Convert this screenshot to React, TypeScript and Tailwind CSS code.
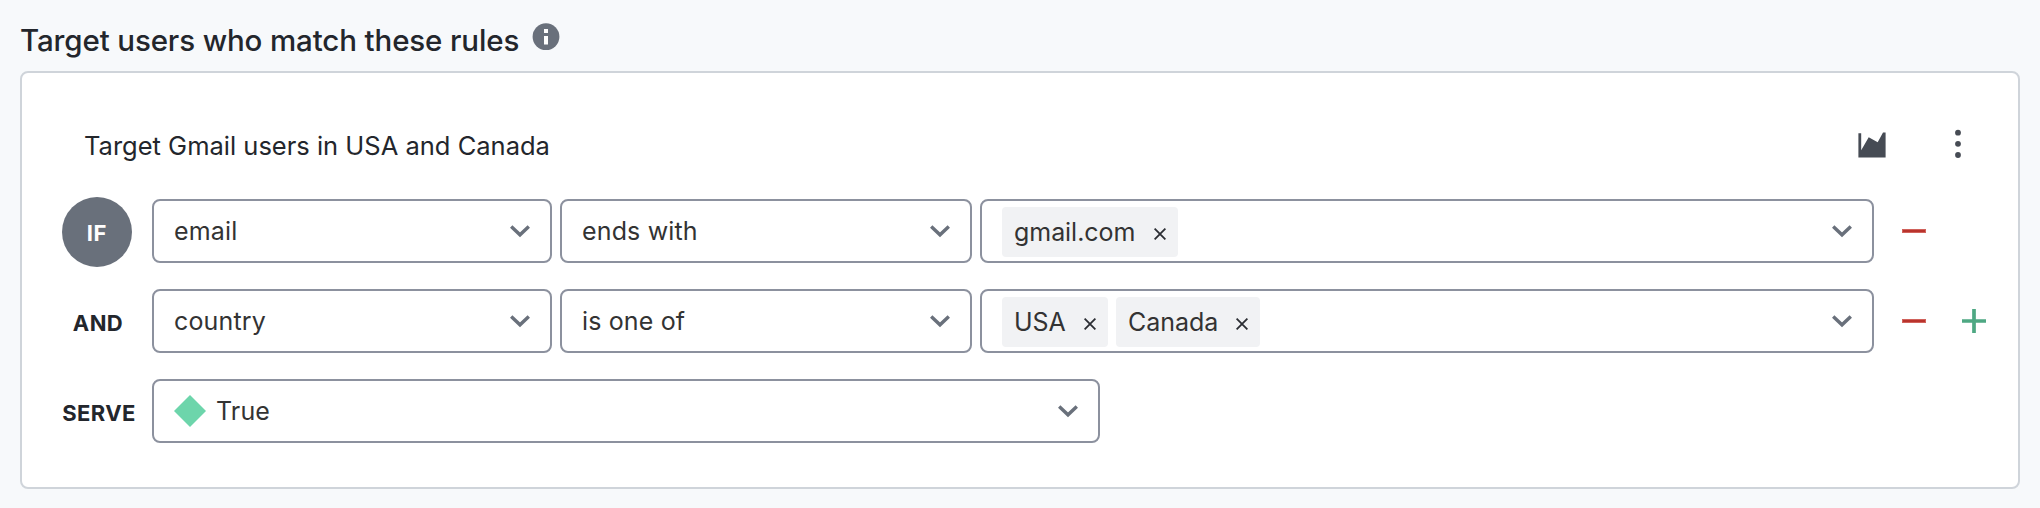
import React from "react";

function Chevron() {
  return (
    <svg width="24" height="16" viewBox="0 0 24 16" fill="none" className="shrink-0">
      <path d="M3.2 3.4 12 11.8l8.8-8.4" stroke="#69707b" strokeWidth="3.4" />
    </svg>
  );
}

function Select({ className, children }: { className: string; children: React.ReactNode }) {
  return (
    <div
      className={`flex h-16 shrink-0 items-center justify-between rounded-lg border-2 border-[#8c919e] bg-white pr-[18px] pl-5 text-[25px] leading-[32px] tracking-[0.15px] text-[#333333] ${className}`}
    >
      <div className="flex items-center">{children}</div>
      <Chevron />
    </div>
  );
}

function Tag({ className, label }: { className: string; label: string }) {
  return (
    <div
      className={`flex h-[50px] items-center justify-between rounded-[4px] bg-[#f1f2f4] pr-3 pl-3 tracking-[-0.05px] ${className}`}
    >
      <span>{label}</span>
      <svg width="12" height="12" viewBox="0 0 12 12" className="mt-[3px]">
        <path d="M0.6 0.6 11.4 11.4M11.4 0.6 0.6 11.4" stroke="#2b2d33" strokeWidth="1.8" />
      </svg>
    </div>
  );
}

function Minus() {
  return (
    <svg width="24" height="24" viewBox="0 0 24 24" className="shrink-0">
      <rect x="0" y="10" width="24" height="4" fill="#d0625b" />
      <rect x="1" y="11" width="22" height="2" fill="#b9332c" />
    </svg>
  );
}

function Plus() {
  return (
    <svg width="24" height="24" viewBox="0 0 24 24" className="shrink-0">
      <path d="M0 12H24M12 0V24" stroke="#4ea883" strokeWidth="3.7" />
    </svg>
  );
}

function RowLabel({ className, children }: { className: string; children: React.ReactNode }) {
  return (
    <div
      className={`flex w-[112px] shrink-0 justify-center pt-1 text-[22px] leading-[28px] font-bold tracking-[0.4px] text-[#23262c] ${className}`}
    >
      {children}
    </div>
  );
}

export default function App() {
  return (
    <main className="h-[508px] w-[2040px] overflow-hidden bg-[#f7f9fb] px-5 pt-[19px] font-['Inter',sans-serif] text-[#23262c]">
      <header className="flex h-[52px] items-start">
        <h1 className="w-[512px] text-[29.5px] leading-[42px] font-medium tracking-[-0.13px] whitespace-nowrap">
          Target users who match these rules
        </h1>
        <svg width="28" height="28" viewBox="0 0 28 28" className="mt-1">
          <circle cx="14" cy="13.7" r="13.4" fill="#69707b" />
          <path d="M12 6h4v4h-4zM12 13h4v8.6h-4z" fill="#fff" />
        </svg>
      </header>

      <section className="flex h-[418px] w-[2000px] flex-col rounded-lg border-2 border-[#cfd4da] bg-white pl-[18px]">
        <div className="flex h-[126px] items-start">
          <h2 className="mt-[56px] ml-[44px] w-[1772px] text-[25.5px] leading-[34px] whitespace-nowrap">
            Target Gmail users in USA and Canada
          </h2>
          <svg width="32" height="32" viewBox="0 0 32 32" className="mt-[56px] shrink-0">
            <path
              d="M2.4 4.2h2.8v17L12.7 8.2l9 5L27 3.4h2.6v25H2.4z"
              fill="#464b54"
            />
          </svg>
          <svg width="8" height="32" viewBox="0 0 8 32" className="mt-[56px] ml-[66px] shrink-0">
            <circle cx="4" cy="3.7" r="2.9" fill="#464b54" />
            <circle cx="4" cy="14.8" r="2.9" fill="#464b54" />
            <circle cx="4" cy="26" r="2.9" fill="#464b54" />
          </svg>
        </div>

        <div className="flex flex-col gap-[26px]">
          <div className="flex h-16 items-center">
            <div className="flex w-[112px] shrink-0 pl-[22px]">
              <div className="mt-[2px] flex size-[70px] shrink-0 items-center justify-center rounded-full bg-[#69707b] pt-[2px] text-[22px] leading-[28px] font-bold tracking-[0.6px] text-white">
                IF
              </div>
            </div>
            <Select className="w-[400px]">email</Select>
            <Select className="ml-2 w-[412px]">ends with</Select>
            <Select className="ml-2 w-[894px]">
              <Tag className="mt-[2px] w-[176px]" label="gmail.com" />
            </Select>
            <div className="ml-7 flex">
              <Minus />
            </div>
          </div>

          <div className="flex h-16 items-center">
            <RowLabel className="pl-[4px]">AND</RowLabel>
            <Select className="w-[400px]">country</Select>
            <Select className="ml-2 w-[412px]">is one of</Select>
            <Select className="ml-2 w-[894px]">
              <Tag className="mt-[2px] w-[106px]" label="USA" />
              <Tag className="mt-[2px] ml-2 w-[144px]" label="Canada" />
            </Select>
            <div className="ml-7 flex gap-9">
              <Minus />
              <Plus />
            </div>
          </div>

          <div className="flex h-16 items-center">
            <RowLabel className="pl-[6px]">SERVE</RowLabel>
            <Select className="w-[948px]">
              <svg width="32" height="32" viewBox="0 0 32 32" className="mr-[10px]">
                <path d="M16 0 32 16 16 32 0 16z" fill="#6dd5ab" />
              </svg>
              True
            </Select>
          </div>
        </div>
      </section>
    </main>
  );
}
